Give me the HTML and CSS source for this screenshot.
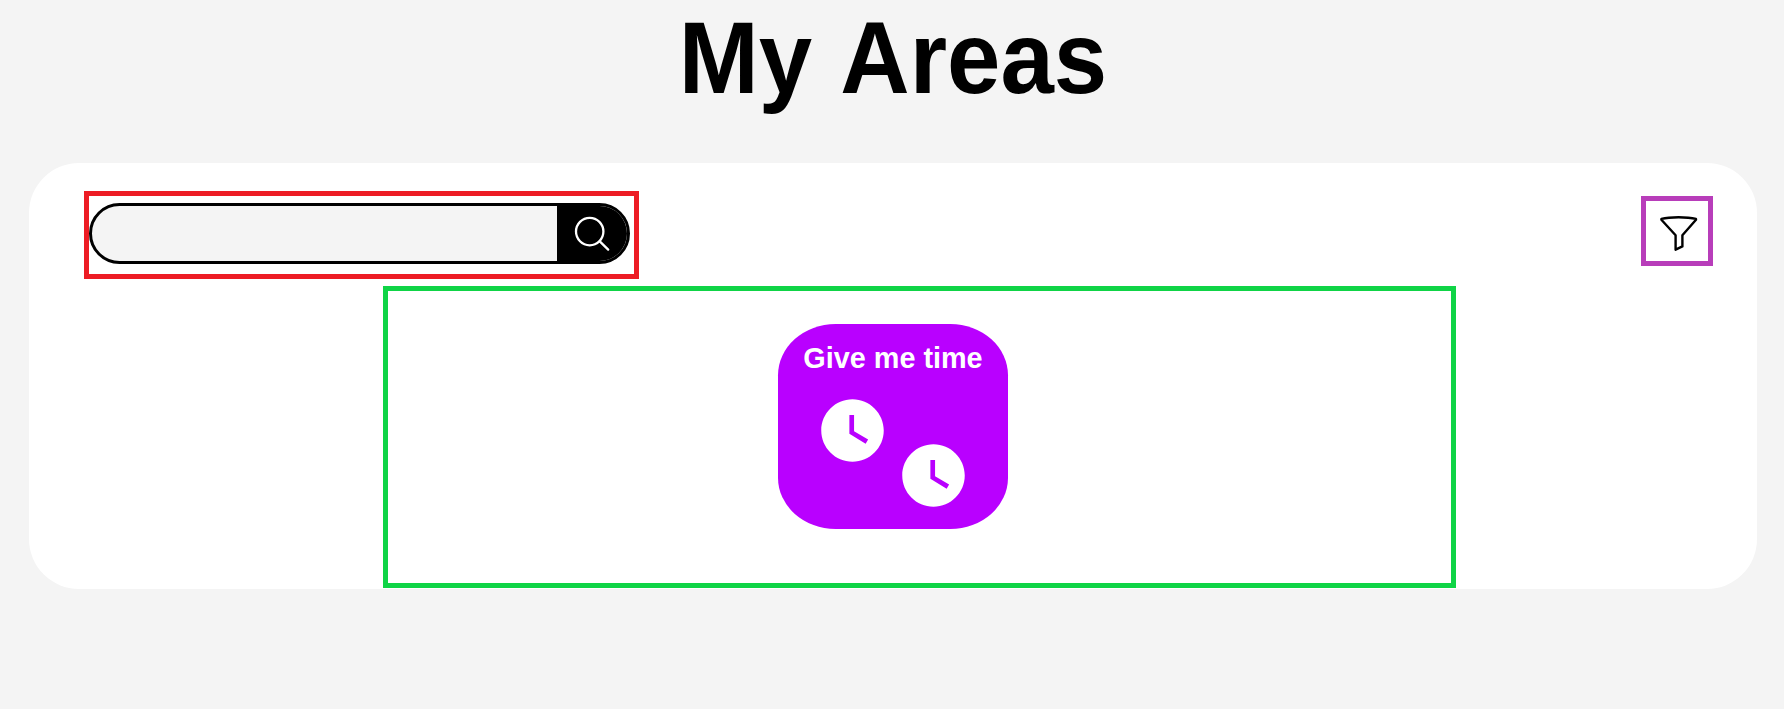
FILE: index.html
```html
<!DOCTYPE html>
<html lang="en">
<head>
<meta charset="utf-8">
<title>My Areas</title>
<link rel="stylesheet" href="styles.css">
</head>
<body>
<h1 class="title"><span class="title-text">My Areas</span></h1>
<main class="panel">
  <div class="toolbar">
    <div class="search-frame">
      <form class="search">
        <input class="search-input" type="text" aria-label="Search">
        <button class="search-button" type="button" aria-label="Search">
          <svg class="search-icon" viewBox="0 0 40 40"><circle cx="16.7" cy="17.6" r="13.7"/><path d="M26.5 27.2 35.2 35.6"/></svg>
        </button>
      </form>
    </div>
    <button class="filter" type="button" aria-label="Filter">
      <svg class="filter-icon" viewBox="0 0 40 40"><path d="M3.4 4.9C12 2.7 29 2.7 38 4.9V5.7L24.4 21.2V32.4L17.6 35.7V21.2L3.4 5.7Z"/></svg>
    </button>
  </div>
  <section class="areas">
    <article class="card">
      <h2 class="card-title"><span class="card-title-text">Give me time</span></h2>
      <div class="card-icons">
        <svg class="clock" viewBox="0 0 24 24"><path d="M12 2C6.5 2 2 6.5 2 12s4.5 10 10 10 10-4.5 10-10S17.5 2 12 2zm4.2 14.2L11 13V7h1.5v5.2l4.5 2.7-.8 1.3z"/></svg>
        <svg class="clock clock-low" viewBox="0 0 24 24"><path d="M12 2C6.5 2 2 6.5 2 12s4.5 10 10 10 10-4.5 10-10S17.5 2 12 2zm4.2 14.2L11 13V7h1.5v5.2l4.5 2.7-.8 1.3z"/></svg>
      </div>
    </article>
  </section>
</main>
</body>
</html>
```
FILE: styles.css
```css
* {
  box-sizing: border-box;
}

body {
  margin: 0;
  min-height: 709px;
  background: #f4f4f4;
  font-family: "Liberation Sans", Arial, sans-serif;
  color: #000;
}

.title {
  margin: 0;
  padding: 3px 0 0 2px;
  height: 163px;
  font-size: 96px;
  line-height: 110px;
  text-align: center;
  word-spacing: 5px;
}

.title-text {
  display: inline-block;
  transform: scaleY(1.06);
}

.panel {
  margin: 0 27px 0 29px;
  height: 426px;
  border-radius: 50px;
  background: #fff;
}

.toolbar {
  display: flex;
  justify-content: space-between;
  align-items: flex-start;
  height: 123px;
  padding: 28px 44px 0 55px;
}

.search-frame {
  width: 555px;
  height: 88px;
  padding-top: 7px;
  border: 5px solid #ed1c24;
}

.search {
  display: flex;
  width: 541px;
  height: 61px;
  overflow: hidden;
  border: 3px solid #000;
  border-radius: 31px;
  background: #f4f4f4;
}

.search-input {
  flex: 1;
  min-width: 0;
  padding: 0 24px;
  border: 0;
  background: transparent;
  font-size: 20px;
}

.search-button {
  width: 70px;
  padding: 0 0 0 16px;
  border: 0;
  background: #000;
}

.search-icon {
  display: block;
  width: 40px;
  height: 40px;
  fill: none;
  stroke: #fff;
  stroke-width: 2.3;
  stroke-linecap: round;
}

.filter {
  width: 72px;
  height: 70px;
  margin-top: 5px;
  padding: 6px 0 0 12px;
  border: 5px solid #b83dba;
  background: #fff;
}

.filter-icon {
  display: block;
  width: 40px;
  height: 40px;
  fill: none;
  stroke: #000;
  stroke-width: 2.4;
  stroke-linejoin: round;
}

.areas {
  width: 1073px;
  height: 302px;
  margin-left: 354px;
  padding: 33px 0 0 390px;
  border: 5px solid #0fd446;
}

.card {
  width: 230px;
  height: 205px;
  padding-top: 17px;
  border-radius: 25%;
  background: #b900ff;
}

.card-title {
  margin: 0;
  font-size: 28.8px;
  line-height: 34px;
  text-align: center;
  white-space: nowrap;
  color: #fff;
}

.card-title-text {
  display: inline-block;
  transform: scaleY(1.05);
}

.card-icons {
  display: flex;
  gap: 6px;
  padding: 18px 0 0 37px;
}

.clock {
  flex: none;
  width: 75px;
  height: 75px;
  fill: #fff;
}

.clock-low {
  margin-top: 45px;
}
```
